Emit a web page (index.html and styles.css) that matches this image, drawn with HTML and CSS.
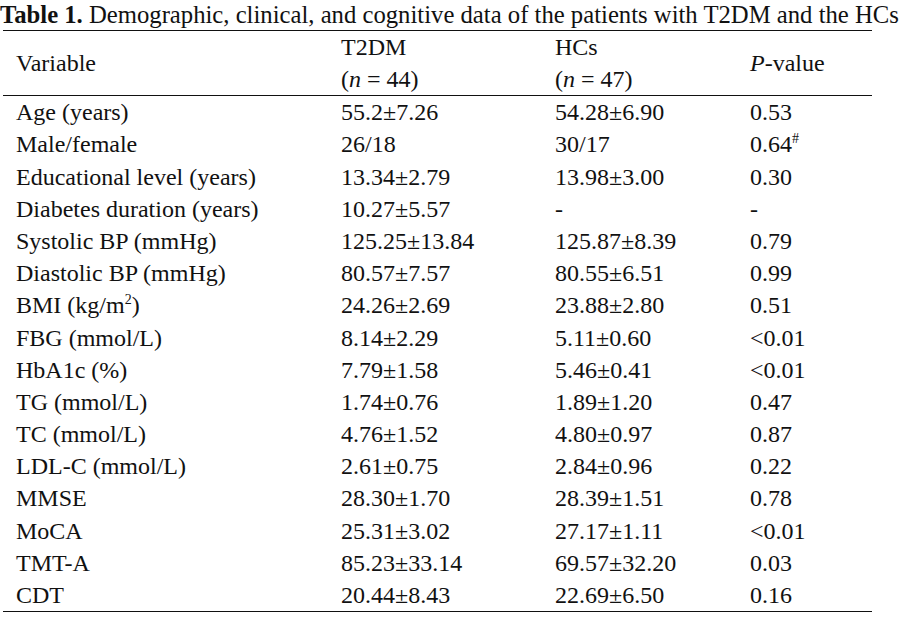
FILE: index.html
```html
<!DOCTYPE html>
<html>
<head>
<meta charset="utf-8">
<link rel="stylesheet" href="styles.css">
</head>
<body>
<div class="caption"><b>Table 1.</b> Demographic, clinical, and cognitive data of the patients with T2DM and the HCs</div>
<table class="data">
<colgroup><col class="c1"><col class="c2"><col class="c3"><col class="c4"></colgroup>
<thead>
<tr><th class="var">Variable</th><th>T2DM<br>(<i>n</i> = 44)</th><th>HCs<br>(<i>n</i> = 47)</th><th class="pv"><i>P</i>-value</th></tr>
</thead>
<tbody>
<tr><td>Age (years)</td><td>55.2±7.26</td><td>54.28±6.90</td><td>0.53</td></tr>
<tr><td>Male/female</td><td>26/18</td><td>30/17</td><td>0.64<sup>#</sup></td></tr>
<tr><td>Educational level (years)</td><td>13.34±2.79</td><td>13.98±3.00</td><td>0.30</td></tr>
<tr><td>Diabetes duration (years)</td><td>10.27±5.57</td><td>-</td><td>-</td></tr>
<tr><td>Systolic BP (mmHg)</td><td>125.25±13.84</td><td>125.87±8.39</td><td>0.79</td></tr>
<tr><td>Diastolic BP (mmHg)</td><td>80.57±7.57</td><td>80.55±6.51</td><td>0.99</td></tr>
<tr><td>BMI (kg/m<sup>2</sup>)</td><td>24.26±2.69</td><td>23.88±2.80</td><td>0.51</td></tr>
<tr><td>FBG (mmol/L)</td><td>8.14±2.29</td><td>5.11±0.60</td><td>&lt;0.01</td></tr>
<tr><td>HbA1c (%)</td><td>7.79±1.58</td><td>5.46±0.41</td><td>&lt;0.01</td></tr>
<tr><td>TG (mmol/L)</td><td>1.74±0.76</td><td>1.89±1.20</td><td>0.47</td></tr>
<tr><td>TC (mmol/L)</td><td>4.76±1.52</td><td>4.80±0.97</td><td>0.87</td></tr>
<tr><td>LDL-C (mmol/L)</td><td>2.61±0.75</td><td>2.84±0.96</td><td>0.22</td></tr>
<tr><td>MMSE</td><td>28.30±1.70</td><td>28.39±1.51</td><td>0.78</td></tr>
<tr><td>MoCA</td><td>25.31±3.02</td><td>27.17±1.11</td><td>&lt;0.01</td></tr>
<tr><td>TMT-A</td><td>85.23±33.14</td><td>69.57±32.20</td><td>0.03</td></tr>
<tr><td>CDT</td><td>20.44±8.43</td><td>22.69±6.50</td><td>0.16</td></tr>
</tbody>
</table>
</body>
</html>
```
FILE: styles.css
```css
html, body {
  margin: 0;
  padding: 0;
  background: #fff;
}
body {
  font-family: "Liberation Serif", "Times New Roman", serif;
  font-size: 24px;
  color: #111;
  width: 911px;
  height: 618px;
  overflow: hidden;
}
.caption {
  font-size: 24.7px;
  line-height: 30px;
  height: 30px;
  white-space: nowrap;
}
.caption b {
  font-weight: bold;
}
.data {
  margin-left: 3px;
  width: 869px;
  border-collapse: collapse;
  table-layout: fixed;
  border-top: 1.5px solid #111;
  border-bottom: 1.5px solid #111;
}
.c1 { width: 338px; }
.c2 { width: 214px; }
.c3 { width: 195px; }
.c4 { width: 122px; }
.data th {
  font-weight: normal;
  text-align: left;
  vertical-align: middle;
  padding: 0;
  line-height: 32px;
  height: 64px;
  border-bottom: 1.5px solid #111;
}
.data th.var {
  padding-left: 13px;
}
.data td {
  padding: 1.2px 0 0 0;
  line-height: 31px;
  height: 31px;
  white-space: nowrap;
  vertical-align: middle;
}
.data td:first-child {
  padding-left: 13px;
}
sup {
  font-size: 14px;
  line-height: 0;
  vertical-align: 9px;
}
```
